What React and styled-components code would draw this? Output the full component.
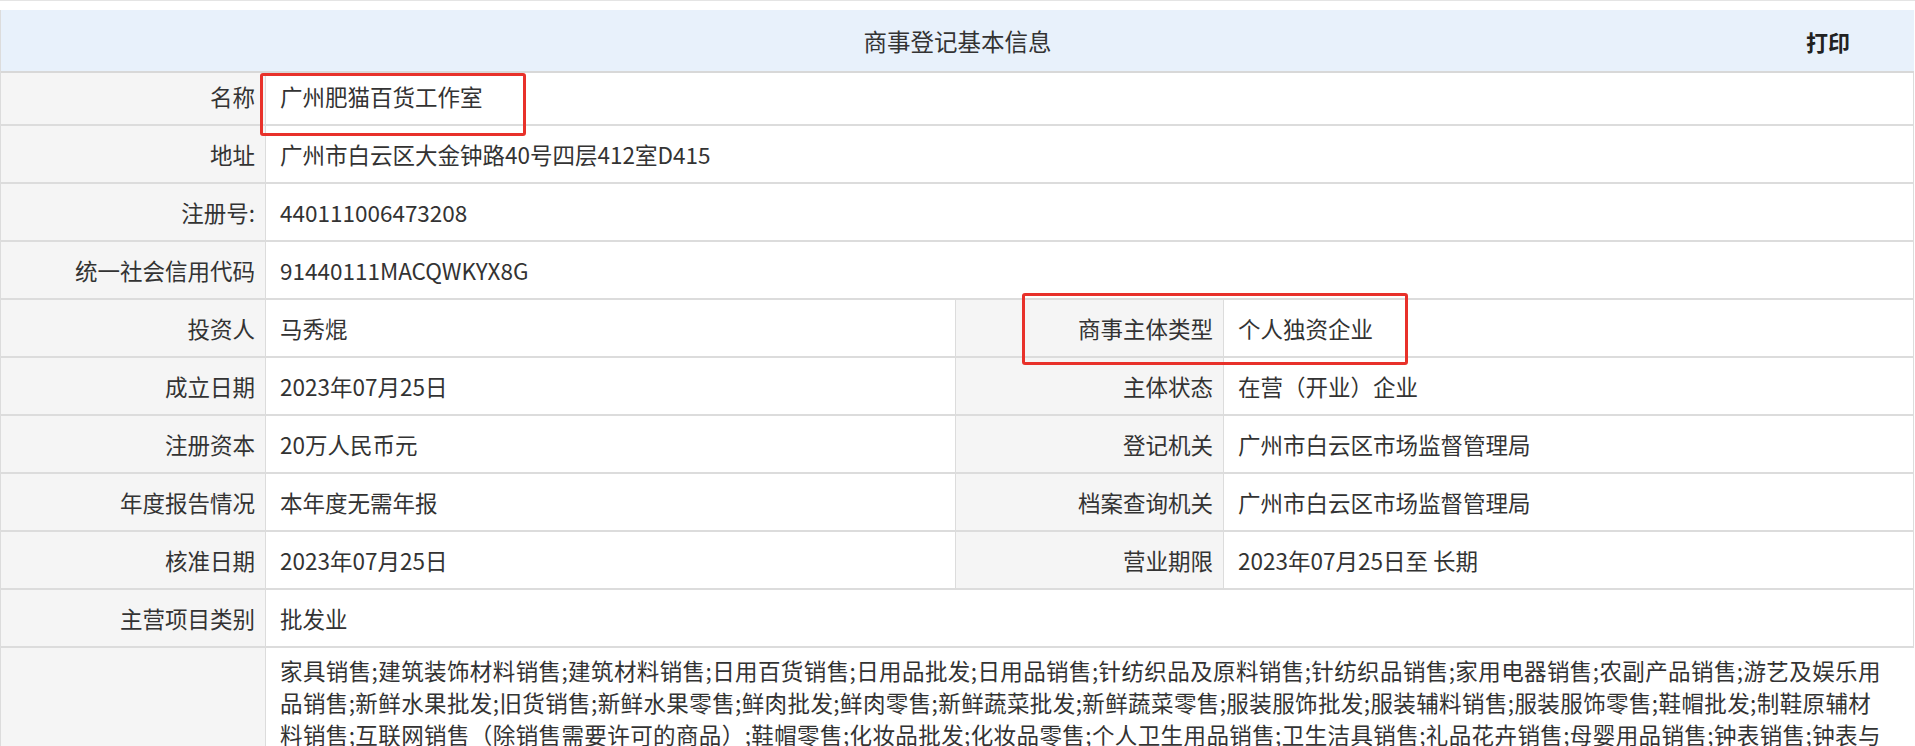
import React from "react";
import styled, { createGlobalStyle } from "styled-components";

const Global = createGlobalStyle`
  body {
    margin: 0;
    background: #fff;
    font-family: "Noto Sans CJK SC", "Noto Sans", sans-serif;
    color: #333;
    overflow: hidden;
  }
`;

const rows = [
  { label: "名称", value: "广州肥猫百货工作室" },
  { label: "地址", value: "广州市白云区大金钟路40号四层412室D415" },
  { label: "注册号:", value: "440111006473208" },
  { label: "统一社会信用代码", value: "91440111MACQWKYX8G" },
  { label: "投资人", value: "马秀焜", label2: "商事主体类型", value2: "个人独资企业" },
  { label: "成立日期", value: "2023年07月25日", label2: "主体状态", value2: "在营（开业）企业" },
  { label: "注册资本", value: "20万人民币元", label2: "登记机关", value2: "广州市白云区市场监督管理局" },
  { label: "年度报告情况", value: "本年度无需年报", label2: "档案查询机关", value2: "广州市白云区市场监督管理局" },
  { label: "核准日期", value: "2023年07月25日", label2: "营业期限", value2: "2023年07月25日至 长期" },
  { label: "主营项目类别", value: "批发业" },
];

const scope =
  "家具销售;建筑装饰材料销售;建筑材料销售;日用百货销售;日用品批发;日用品销售;针纺织品及原料销售;针纺织品销售;家用电器销售;农副产品销售;游艺及娱乐用品销售;新鲜水果批发;旧货销售;新鲜水果零售;鲜肉批发;鲜肉零售;新鲜蔬菜批发;新鲜蔬菜零售;服装服饰批发;服装辅料销售;服装服饰零售;鞋帽批发;制鞋原辅材料销售;互联网销售（除销售需要许可的商品）;鞋帽零售;化妆品批发;化妆品零售;个人卫生用品销售;卫生洁具销售;礼品花卉销售;母婴用品销售;钟表销售;钟表与计时仪器销售";

const App = () => (
  <>
    <Global />
    <Page>
      <Table>
        <Header>
          <Title>商事登记基本信息</Title>
          <Print>打印</Print>
        </Header>
        {rows.map((r) => (
          <React.Fragment key={r.label}>
            <Label>{r.label}</Label>
            {r.label2 ? (
              <>
                <Value>{r.value}</Value>
                <Label>{r.label2}</Label>
                <Value>{r.value2}</Value>
              </>
            ) : (
              <Value $wide>{r.value}</Value>
            )}
          </React.Fragment>
        ))}
        <Label $tall />
        <Scope>{scope}</Scope>
        <Mark $top={63} $left={259} $w={266} $h={63} />
        <Mark $top={283} $left={1021} $w={386} $h={72} />
      </Table>
    </Page>
  </>
);

const Page = styled.div`
  padding-top: 9px;
  border-top: 1px solid #e4e4e4;
  height: 737px;
  overflow: hidden;
`;

const Table = styled.div`
  position: relative;
  display: grid;
  grid-template-columns: 265px 690px 268px 1fr;
  grid-auto-rows: 58px;
  width: 1913px;
  border-left: 1px solid #dcdcdc;
  font-size: 22.5px;
`;

const Header = styled.div`
  grid-column: 1 / -1;
  height: 61px;
  background: #e8f1fb;
  border-bottom: 2px solid #d8d8d8;
  display: flex;
  align-items: center;
  justify-content: center;
  position: relative;
`;

const Title = styled.div`
  font-size: 23.5px;
  color: #333;
`;

const Print = styled.div`
  position: absolute;
  right: 64px;
  font-size: 22px;
  font-weight: 700;
  color: #222;
`;

const Label = styled.div`
  background: #f5f5f5;
  border-bottom: 2px solid #dcdcdc;
  border-right: 1px solid #dcdcdc;
  display: flex;
  align-items: center;
  justify-content: flex-end;
  padding-right: 10px;
  color: #333;
  ${(p) => p.$tall && "grid-row: span 4;"}
`;

const Value = styled.div`
  grid-column: ${(p) => (p.$wide ? "span 3" : "auto")};
  background: #fff;
  border-bottom: 2px solid #dcdcdc;
  border-right: 1px solid #dcdcdc;
  display: flex;
  align-items: center;
  padding-left: 14px;
  color: #333;
`;

const Scope = styled.div`
  grid-column: span 3;
  grid-row: span 4;
  padding: 6px 20px 0 14px;
  line-height: 32px;
  font-size: 22.5px;
  letter-spacing: 0.4px;
  color: #333;
  word-break: break-all;
`;

const Mark = styled.div`
  position: absolute;
  top: ${(p) => p.$top}px;
  left: ${(p) => p.$left}px;
  width: ${(p) => p.$w}px;
  height: ${(p) => p.$h}px;
  border: 3px solid #e8312a;
  border-radius: 3px;
  box-sizing: border-box;
  pointer-events: none;
`;

export default App;
